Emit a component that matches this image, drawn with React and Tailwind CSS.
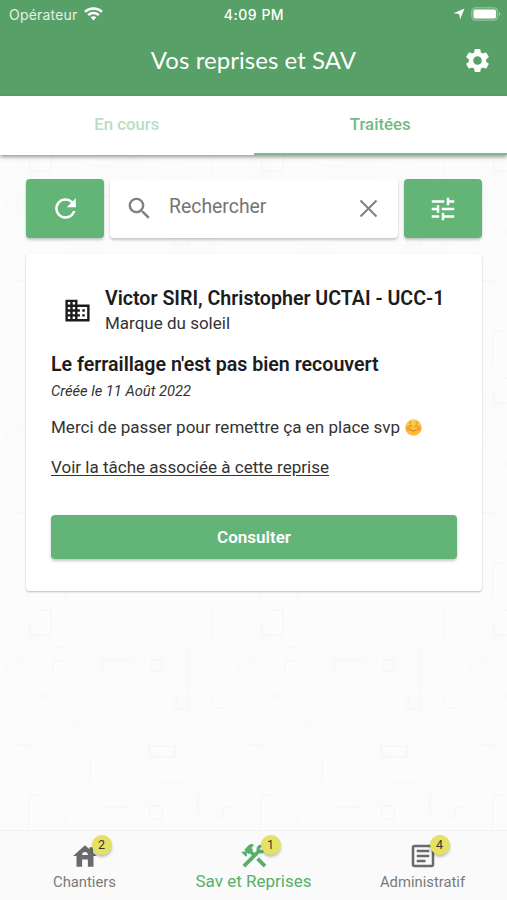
import { MdConstruction, MdDomain, MdOutlineArticle, MdRefresh, MdSearch, MdSettings, MdTune } from "react-icons/md";

const TABS = [
  { label: "En cours", active: false },
  { label: "Traitées", active: true },
];

function StatusBar() {
  return (
    <div className="flex h-7 items-center justify-between pl-[9px] pr-[6px] text-white">
      <div className="flex w-40 items-center gap-[6px] font-['Inter',sans-serif] text-[14px] tracking-[0.2px]">
        <span className="opacity-85">Opérateur</span>
        <svg className="h-[14px] w-[19px]" viewBox="0 0 19 14" fill="none" stroke="currentColor" strokeWidth="2.5">
          <path d="M1 4.8C5.8.3 13.2.3 18 4.8" />
          <path d="M4.2 8.2c3-2.8 7.6-2.8 10.6 0" />
          <path d="M6.6 10.2c1.7-1.4 4.1-1.4 5.8 0L9.5 13.5z" fill="currentColor" stroke="none" />
        </svg>
      </div>
      <span className="pr-[2px] font-['Inter',sans-serif] text-[14px] font-medium tracking-[0.5px]">4:09 PM</span>
      <div className="flex w-40 items-center justify-end gap-[6px]">
        <svg className="size-3" viewBox="0 0 12 12" fill="currentColor">
          <path d="M11.5.5 7 11.5 6.2 6 .5 5.2z" />
        </svg>
        <svg className="h-[14px] w-[30px]" viewBox="0 0 30 14">
          <rect x=".7" y=".7" width="26" height="12.6" rx="3.5" fill="#fff" fillOpacity=".12" stroke="#fff" strokeOpacity=".35" />
          <rect x="2.5" y="2.5" width="22.5" height="9" rx="1.8" fill="#fff" />
          <path d="M28 5v4q1.500-.7 1.500-2T28 5" fill="#fff" fillOpacity=".4" />
        </svg>
      </div>
    </div>
  );
}

function Header() {
  return (
    <header className="h-24 shrink-0 bg-[#57a067] text-white">
      <StatusBar />
      <div className="grid h-16 grid-cols-[59px_1fr_59px] items-center">
        <h1 className="col-start-2 text-center font-['Lato',sans-serif] text-[24px] tracking-[0.05px]">Vos reprises et SAV</h1>
        <button aria-label="Paramètres" className="flex justify-center">
          <MdSettings className="size-[29px]" />
        </button>
      </div>
    </header>
  );
}

function Tabs() {
  return (
    <nav className="flex h-[59px] shrink-0 bg-white shadow-[0_2px_4px_rgba(0,0,0,0.4)]">
      {TABS.map((tab) => (
        <button
          key={tab.label}
          className={
            tab.active
              ? "flex-1 border-b-2 border-[#7dbb8e] pt-[1px] text-[16.8px] font-medium text-[#6fbb82]"
              : "flex-1 border-b-2 border-transparent pt-[1px] text-[16.8px] font-medium text-[#b9dec2]"
          }
        >
          {tab.label}
        </button>
      ))}
    </nav>
  );
}

// faint paper texture, repeated every 232px
function Texture() {
  return (
    <svg className="absolute inset-0 size-full" aria-hidden="true">
      <defs>
        <pattern id="paper" width="232" height="232" patternUnits="userSpaceOnUse" y="445">
          <rect width="232" height="232" fill="#fcfcfc" />
          <path d="M96 0h50v70H96zM15 20h26v60H15zM156 35h42v50h-42zM70 105h30v36H70zM170 95h40v28h-40zM24 140h50v50H24zM118 150h42v60h-42zM190 155h30v65h-30z" fill="#fbfbfb" />
          <path d="M40 10h11v25H30V24M53 47h12M53 72V61h12M102 71V60h23M151 60h11v11h-11zM188 72V52M188 75v34h-12V97M212 95v13h12M39 96h14M149 157v-11h26v11zM16 145h12M90 158v24M29 229v-34h10M101 207h26M150 206h12v13h-12zM198 194v20M223 219v-12h12v12" fill="none" stroke="#f4f4f4" />
          <path d="M88 0v30h28M135 15v45h-30M6 60h18v12H6zM0 120h76v15M126 183h62v-20M50 170v32h35M112 85h42v14M205 140v36h27M160 10v18h24M65 212v20M116 220h30M212 5v40" fill="none" stroke="#f9f9f9" />
        </pattern>
      </defs>
      <rect width="100%" height="100%" fill="url(#paper)" />
    </svg>
  );
}

function SearchBar() {
  return (
    <div className="flex h-[59px] gap-[6px]">
      <button aria-label="Actualiser" className="flex w-[78px] items-center justify-center rounded-[4px] bg-[#62b577] text-white shadow-[0_2px_3px_rgba(0,0,0,0.22)]">
        <MdRefresh className="size-[31px]" />
      </button>
      <div className="flex min-w-0 flex-1 items-center rounded-[4px] bg-white pl-[15px] pr-[16px] text-[#808080] shadow-[0_2px_3px_rgba(0,0,0,0.22)]">
        <MdSearch className="size-[29px]" />
        <span className="flex-1 pb-[4px] pl-[15px] text-[19.4px] text-[#757575]">Rechercher</span>
        <svg className="size-[27px]" viewBox="0 0 27 27" fill="none" stroke="currentColor" strokeWidth="2">
          <path d="m5.5 5.5 16 16m0-16-16 16" />
        </svg>
      </div>
      <button aria-label="Filtrer" className="flex w-[78px] items-center justify-center rounded-[4px] bg-[#62b577] text-white shadow-[0_2px_3px_rgba(0,0,0,0.22)]">
        <MdTune className="size-[30px]" />
      </button>
    </div>
  );
}

function Smiley() {
  return (
    <svg className="ml-[5px] inline-block size-[17px] align-[-3px]" viewBox="0 0 17 17" fill="none">
      <defs>
        <linearGradient id="face" x2="0" y2="1">
          <stop stopColor="#fbd04f" />
          <stop offset="1" stopColor="#ffb52b" />
        </linearGradient>
      </defs>
      <circle cx="8.5" cy="8.5" r="8.3" fill="url(#face)" />
      <circle cx="3.3" cy="9.5" r="2.2" fill="#f58442" opacity=".55" />
      <circle cx="13.7" cy="9.5" r="2.2" fill="#f58442" opacity=".55" />
      <path d="M4 7.200q1.500-2.200 3 0m3 0q1.500-2.200 3 0M5.500 11q3 2.500 6 0M4.500 4l1.500-.8m5 0 1.500.8" stroke="#a8701f" strokeWidth=".8" strokeLinecap="round" />
    </svg>
  );
}

function RepriseCard() {
  return (
    <article className="mt-4 flex h-[337px] flex-col rounded-[4px] bg-white px-[25px] pt-8 shadow-[0_1px_2px_rgba(0,0,0,0.25)]">
      <div className="flex items-center">
        <MdDomain className="ml-3 size-[29px]" />
        <div className="ml-[13px]">
          <h2 className="whitespace-nowrap text-[19.6px] font-semibold leading-[26px]">Victor SIRI, Christopher UCTAI - UCC-1</h2>
          <p className="text-[17px] leading-[22px] text-[#333]">Marque du soleil</p>
        </div>
      </div>
      <h3 className="mt-[18px] whitespace-nowrap text-[19.6px] font-semibold leading-[26px]">Le ferraillage n'est pas bien recouvert</h3>
      <p className="text-[14.7px] italic leading-[26px] text-[#333]">Créée le 11 Août 2022</p>
      <p className="mt-[11px] whitespace-nowrap text-[17.05px] leading-6 text-[#333]">
        Merci de passer pour remettre ça en place svp
        <Smiley />
      </p>
      <a className="mt-4 text-[17.05px] leading-6 text-[#333] underline underline-offset-2">Voir la tâche associée à cette reprise</a>
      <button className="mt-9 h-11 rounded-[4px] bg-[#62b577] pt-[1px] text-[17px] font-semibold text-white shadow-[0_2px_3px_rgba(0,0,0,0.22)]">
        Consulter
      </button>
    </article>
  );
}

function HouseIcon({ className }) {
  return (
    <svg className={className} viewBox="0 0 29 29" fill="currentColor" fillRule="evenodd">
      <path d="M14.5 4 3 14.5h3.3V25h5.4v-7h5.600v7h5.400V14.500H26l-3.700-3.400V6h-3.500v2zM11.700 13.500a2.800 2.800 0 0 1 5.600 0z" />
    </svg>
  );
}

const NAV = [
  { label: "Chantiers", count: 2, icon: HouseIcon, active: false },
  { label: "Sav et Reprises", count: 1, icon: MdConstruction, active: true },
  { label: "Administratif", count: 4, icon: MdOutlineArticle, active: false },
];

function BottomNav() {
  return (
    <nav className="relative grid h-[70px] shrink-0 grid-cols-3 border-t border-[#f2f2f2] bg-[#fafafa]">
      {NAV.map(({ label, count, icon: Icon, active }) => (
        <button key={label} className={active ? "flex flex-col items-center pt-[10px] text-[#55b06c]" : "flex flex-col items-center pt-[10px] text-[#6a6a6a]"}>
          <span className="relative">
            <Icon className="size-[30px]" />
            <span className="absolute -top-[6px] left-[22px] flex size-5 items-center justify-center rounded-full bg-[#e5e163] text-[12.5px] text-[#333] shadow-[0_2px_3px_rgba(0,0,0,0.25)]">
              {count}
            </span>
          </span>
          <span className={active ? "-mt-[1px] text-[17px] leading-[22px]" : "text-[14.8px] leading-[22px] text-[#7a7a7a]"}>{label}</span>
        </button>
      ))}
    </nav>
  );
}

export default function App() {
  return (
    <div className="flex h-[900px] w-[507px] flex-col overflow-hidden bg-[#fcfcfc] font-['Roboto',sans-serif] text-[#1c1c1c]">
      <Header />
      <div className="relative z-10">
        <Tabs />
      </div>
      <main className="relative flex-1">
        <Texture />
        <div className="relative pl-[26px] pr-[25px] pt-6">
          <SearchBar />
          <RepriseCard />
        </div>
      </main>
      <BottomNav />
    </div>
  );
}
